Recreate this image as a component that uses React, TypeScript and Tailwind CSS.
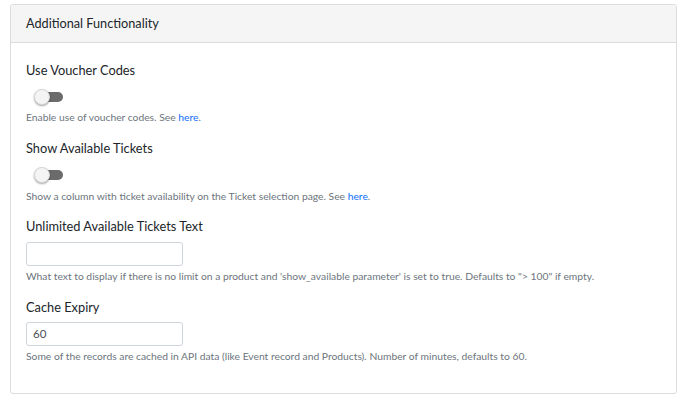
import React from "react";

const font = { fontFamily: 'Lato, "Noto Sans", sans-serif' };

function Toggle() {
  return (
    <div className="relative h-[16px] w-[30px] ml-[8px]">
      <div className="absolute left-[6px] top-[3px] h-[10px] w-[23px] rounded-full bg-[#6b6b6b]" />
      <div className="absolute left-0 top-0 h-[16px] w-[16px] rounded-full bg-[#f4f4f4] border border-[#d6d6d6] shadow-[0_1px_2px_rgba(0,0,0,0.35)]" />
    </div>
  );
}

export default function App() {
  return (
    <div className="bg-white w-[685px] h-[403px] pt-[4px] pl-[10px]" style={font}>
      <div className="w-[667px] border border-[#dcdcdc] rounded-[3px] overflow-hidden">
        <div className="h-[38px] bg-[#f5f5f5] border-b border-[#dcdcdc] px-[15px] flex items-center text-[12.7px] text-[#212529]">
          Additional Functionality
        </div>
        <div className="px-[15px] pt-[17px] pb-[29px] text-[#212529]">
          <div className="h-[20px] leading-[20px] text-[12.8px]">Use Voucher Codes</div>
          <div className="mt-[9px]"><Toggle /></div>
          <div className="mt-[4px] h-[16px] leading-[16px] text-[10.3px] text-[#6c757d]">
            Enable use of voucher codes. See <span className="text-[#0d6efd]">here</span>.
          </div>

          <div className="mt-[13px] h-[20px] leading-[20px] text-[12.8px]">Show Available Tickets</div>
          <div className="mt-[9px]"><Toggle /></div>
          <div className="mt-[5px] h-[16px] leading-[16px] text-[10.3px] text-[#6c757d]">
            Show a column with ticket availability on the Ticket selection page. See <span className="text-[#0d6efd]">here</span>.
          </div>

          <div className="mt-[12px] h-[20px] leading-[20px] text-[12.8px]">Unlimited Available Tickets Text</div>
          <div className="mt-[6px] h-[24px] w-[157px] border border-[#ced4da] rounded-[3px]" />
          <div className="mt-[2px] h-[16px] leading-[16px] text-[10.3px] text-[#6c757d]">
            What text to display if there is no limit on a product and 'show_available parameter' is set to true. Defaults to "&gt; 100" if empty.
          </div>

          <div className="mt-[13px] h-[20px] leading-[20px] text-[12.8px]">Cache Expiry</div>
          <div className="mt-[5px] h-[24px] w-[157px] border border-[#ced4da] rounded-[3px] flex items-center px-[6px] text-[11.5px] text-[#495057]">60</div>
          <div className="mt-[2px] h-[16px] leading-[16px] text-[10.3px] text-[#6c757d]">
            Some of the records are cached in API data (like Event record and Products). Number of minutes, defaults to 60.
          </div>
        </div>
      </div>
    </div>
  );
}
